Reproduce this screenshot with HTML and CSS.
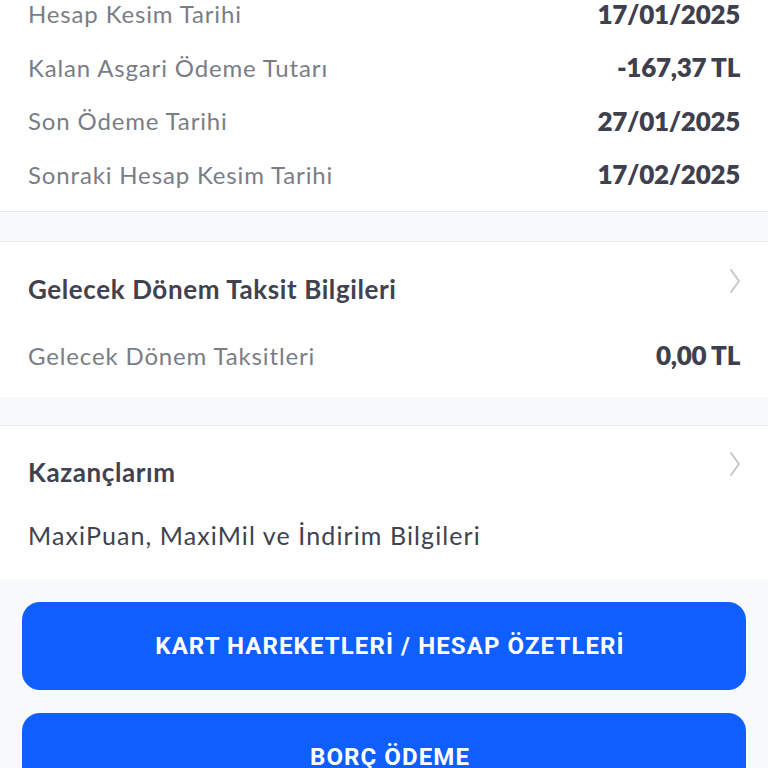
FILE: index.html
```html
<!DOCTYPE html>
<html lang="tr">
<head>
<meta charset="utf-8">
<link rel="stylesheet" href="styles.css">
</head>
<body>
<main class="page">
  <section class="info">
    <div class="row"><span class="label">Hesap Kesim Tarihi</span><span class="value">17/01/2025</span></div>
    <div class="row"><span class="label">Kalan Asgari Ödeme Tutarı</span><span class="value">-167,37 TL</span></div>
    <div class="row"><span class="label">Son Ödeme Tarihi</span><span class="value">27/01/2025</span></div>
    <div class="row"><span class="label">Sonraki Hesap Kesim Tarihi</span><span class="value">17/02/2025</span></div>
  </section>

  <section class="card card-installments">
    <div class="card-head">
      <span class="title">Gelecek Dönem Taksit Bilgileri</span>
      <svg class="chev" width="12" height="26" viewBox="0 0 12 26"><path d="M2 2 L10 13 L2 24" fill="none" stroke="#c6c7cc" stroke-width="2" stroke-linecap="round" stroke-linejoin="round"/></svg>
    </div>
    <div class="card-row"><span class="label">Gelecek Dönem Taksitleri</span><span class="value">0,00 TL</span></div>
  </section>

  <section class="card card-earnings">
    <div class="card-head">
      <span class="title">Kazançlarım</span>
      <svg class="chev" width="12" height="26" viewBox="0 0 12 26"><path d="M2 2 L10 13 L2 24" fill="none" stroke="#c6c7cc" stroke-width="2" stroke-linecap="round" stroke-linejoin="round"/></svg>
    </div>
    <div class="card-row"><span class="desc">MaxiPuan, MaxiMil ve İndirim Bilgileri</span></div>
  </section>

  <section class="actions">
    <button class="btn">KART HAREKETLERİ / HESAP ÖZETLERİ</button>
    <button class="btn">BORÇ ÖDEME</button>
  </section>
</main>
</body>
</html>
```
FILE: styles.css
```css
* { box-sizing: border-box; }
html, body { margin: 0; padding: 0; }
body {
  background: #f8f9fb;
  font-family: Lato, "Open Sans", sans-serif;
  overflow: hidden;
  height: 768px;
}
.page { display: flex; flex-direction: column; }

.info {
  background: #fff;
  margin-top: -13px;
  padding: 0 28px 10px 28px;
  border-bottom: 1px solid #e8e9ed;
}
.row {
  height: 53.5px;
  display: flex;
  align-items: center;
  justify-content: space-between;
}
.label {
  color: #7b7d86;
  font-size: 24px;
  font-weight: 400;
  letter-spacing: 0.85px;
}
.value {
  color: #3e404d;
  font-size: 26px;
  font-weight: 800;
  letter-spacing: -0.3px;
}

.card {
  background: #fff;
  border-top: 1px solid #e8e9ed;
  padding: 0 28px;
}
.card-installments { margin-top: 29px; padding-bottom: 23px; }
.card-earnings { margin-top: 28px; padding-bottom: 27px; }
.card-head {
  display: flex;
  align-items: center;
  justify-content: space-between;
}
.card-installments .card-head { height: 94px; }
.card-earnings .card-head { height: 92px; }
.title {
  color: #40424f;
  font-size: 26px;
  font-weight: 700;
  letter-spacing: 0.6px;
}
.chev { margin-bottom: 16px; margin-right: -1px; }
.card-row {
  display: flex;
  align-items: center;
  justify-content: space-between;
}
.card-installments .card-row { height: 38px; }
.card-earnings .card-row { height: 34px; }
.desc {
  color: #40424f;
  font-size: 25px;
  font-weight: 400;
  letter-spacing: 1.1px;
}

.actions {
  display: flex;
  flex-direction: column;
  gap: 23px;
  padding: 23px 22px 0 22px;
}
.btn {
  height: 88px;
  border: none;
  border-radius: 18px;
  background: #0f5fff;
  color: #fff;
  padding: 0 0 0 12px;
  font-family: Roboto, sans-serif;
  font-size: 24px;
  font-weight: 700;
  letter-spacing: 1.1px;
}
```
